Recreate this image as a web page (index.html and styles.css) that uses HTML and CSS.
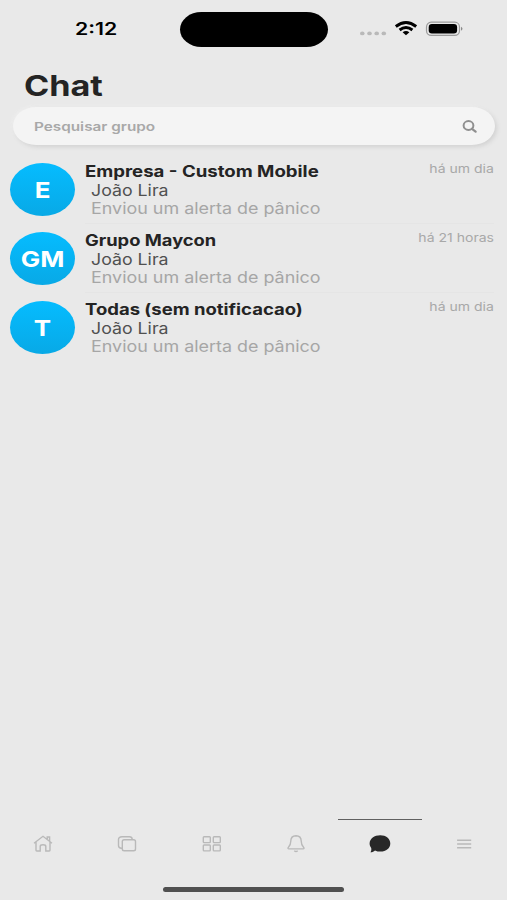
FILE: index.html
```html
<!DOCTYPE html>
<html lang="pt-BR">
<head>
<meta charset="utf-8">
<title>Chat</title>
<link rel="stylesheet" href="styles.css">
</head>
<body>
<div class="screen">
  <header class="status">
    <div class="clock"><span class="wide">2:12</span></div>
    <div class="island"></div>
    <svg class="indicators" width="106" height="20" viewBox="0 0 106 20">
      <g fill="#b9b9b9"><ellipse cx="4.3" cy="14.4" rx="2.3" ry="1.9"/><ellipse cx="11.5" cy="14.4" rx="2.3" ry="1.9"/><ellipse cx="18.7" cy="14.4" rx="2.3" ry="1.9"/><ellipse cx="25.8" cy="14.4" rx="2.3" ry="1.9"/></g>
      <g fill="none" stroke="#000" stroke-width="2.9">
        <path d="M37.8 7.5Q48 -.6 58.2 7.5"/>
        <path d="M41.6 11Q48 5.8 54.4 11"/>
      </g>
      <path d="M44.6 13.2Q48 10.7 51.4 13.2L48 16.2Z" fill="#000"/>
      <rect x="68.5" y="3.2" width="33" height="13.2" rx="4.7" fill="none" stroke="#9b9b9b" stroke-width="1.2"/>
      <rect x="70.7" y="5.1" width="28.4" height="9.4" rx="3.2" fill="#000"/>
      <path d="M103 7.8Q106 9.8 103 11.8Z" fill="#8a8a8a"/>
    </svg>
  </header>
  <h1 class="title"><span class="wide">Chat</span></h1>
  <div class="search">
    <span class="wide">Pesquisar grupo</span>
    <svg width="16" height="14" viewBox="0 0 16 14" fill="none" stroke="#8f8f8f"><ellipse cx="6.5" cy="6.5" rx="4.9" ry="4.4" stroke-width="2"/><path d="M10 9.8L13.6 12.7" stroke-width="2.2" stroke-linecap="round"/></svg>
  </div>
  <main class="list">
    <article class="row">
      <div class="avatar"><span class="wide">E</span></div>
      <div class="body">
        <div class="name"><span class="wide n1">Empresa - Custom Mobile</span></div>
        <div class="sender"><span class="wide">João Lira</span></div>
        <div class="message"><span class="wide">Enviou um alerta de pânico</span></div>
      </div>
      <div class="time"><span class="wide">há um dia</span></div>
    </article>
    <article class="row">
      <div class="avatar"><span class="wide">GM</span></div>
      <div class="body">
        <div class="name"><span class="wide n2">Grupo Maycon</span></div>
        <div class="sender"><span class="wide">João Lira</span></div>
        <div class="message"><span class="wide">Enviou um alerta de pânico</span></div>
      </div>
      <div class="time"><span class="wide">há 21 horas</span></div>
    </article>
    <article class="row">
      <div class="avatar"><span class="wide">T</span></div>
      <div class="body">
        <div class="name"><span class="wide n3">Todas (sem notificacao)</span></div>
        <div class="sender"><span class="wide">João Lira</span></div>
        <div class="message"><span class="wide">Enviou um alerta de pânico</span></div>
      </div>
      <div class="time"><span class="wide">há um dia</span></div>
    </article>
  </main>
  <nav class="tabs">
    <div class="tab"><svg viewBox="0 0 22 20"><path d="M2 9.2L11 2.3L20 9.2M4 8V16.3Q4 17 4.8 17H8.2V12.5Q8.2 10.8 11 10.8Q13.8 10.8 13.8 12.5V17H17.2Q18 17 18 16.3V8M15.2 5V3H17.6V7"/></svg></div>
    <div class="tab"><svg viewBox="0 0 22 20"><rect x="6.3" y="5.8" width="13.2" height="11" rx="1.8"/><path d="M6.3 14.3H5.5Q2.5 14 2.5 11.5V5.5Q2.5 2.8 6 2.8H13.5Q16 2.8 16.3 5.3"/></svg></div>
    <div class="tab"><svg viewBox="0 0 22 20"><rect x="2.3" y="2.7" width="7" height="5.9" rx=".8"/><rect x="12.3" y="2.7" width="7" height="5.9" rx=".8"/><rect x="2.3" y="11" width="7" height="5.9" rx=".8"/><rect x="12.3" y="11" width="7" height="5.9" rx=".8"/></svg></div>
    <div class="tab"><svg viewBox="0 0 22 20"><path d="M11 1.7C7.5 1.8 5.8 4.2 5.8 7C5.8 11 4.8 12 3.3 13.4Q2.4 14.8 4 14.9H18Q19.6 14.8 18.7 13.4C17.2 12 16.2 11 16.2 7C16.2 4.2 14.5 1.8 11 1.7Z"/><path d="M9.3 16.8Q11 18.2 12.7 16.8"/></svg></div>
    <div class="tab active"><svg viewBox="0 0 22 20"><path d="M11.2 1.3C17 1.3 21.3 4.8 21.3 9.5S17 17.6 11.5 17.6C9.4 17.6 7.6 17.2 6 16.4C4.6 17.7 3 18.4 1.4 18.2C2.2 17.1 2.6 15.7 2.2 13.9C1.1 12.6.6 11 .6 9.5C.6 4.8 5.4 1.3 11.2 1.3Z"/></svg></div>
    <div class="tab"><svg viewBox="0 0 22 20"><path d="M3.1 6.2H17.2M3.1 10H17.2M3.1 13.7H17.2"/></svg></div>
  </nav>
  <footer class="home"><div class="handle"></div></footer>
</div>
</body>
</html>
```
FILE: styles.css
```css
* { box-sizing: border-box; }
body { margin: 0; background: #e9e9e9; font-family: Inter, "Liberation Sans", sans-serif; color: #242424; }
.screen { width: 507px; height: 900px; display: flex; flex-direction: column; overflow: hidden; }
.wide { display: inline-block; white-space: nowrap; transform: scaleX(1.22); transform-origin: left center; }
.status { height: 60px; display: grid; grid-template-columns: 180px 148px 1fr; padding-top: 12px; flex: none; }
.clock { padding: 6px 0 0 75px; font-size: 17px; line-height: 22px; font-weight: 600; color: #000; }
.clock .wide { transform: scaleX(1.25); }
.island { height: 35px; border-radius: 22px / 18px; background: #000; }
.indicators { margin: 6.5px 0 0 30px; }
.title { margin: 5px 0 0 24px; height: 42px; font-size: 28px; line-height: 42px; font-weight: 700; }
.search { flex: none; height: 38px; margin: 0 12px 0 13px; padding: 0 17px 0 21px; display: flex; align-items: center; justify-content: space-between; border-radius: 23px / 19px; background: #f4f4f4; color: #a8a8a8; font-size: 12px; font-weight: 600; box-shadow: 2px 2px 4px #d2d2d2, -1px -1px 3px #efefef; }
.search .wide { transform: scaleX(1.275); }
.list { padding: 16px 13px 0 10px; }
.row { display: flex; height: 69px; }
.avatar { flex: none; width: 65px; height: 53px; margin-top: 2px; border-radius: 50%; display: flex; align-items: center; justify-content: center; background: linear-gradient(#05bcff, #08a9e6); color: #fff; font-size: 22px; font-weight: 700; }
.avatar .wide { transform-origin: center; transform: scaleX(1.18); }
.body { flex: 1; margin-left: 10px; padding-top: 2px; font-size: 15.5px; line-height: 18.6px; border-bottom: 1px solid #e5e5e5; height: 63px; }
.row:last-child .body { border-bottom: 0; }
.name { font-weight: 700; }
.n1 { transform: scaleX(1.2); }
.n2 { transform: scaleX(1.182); }
.n3 { transform: scaleX(1.193); }
.sender, .message { padding-left: 6px; }
.sender { color: #505050; }
.sender .wide { transform: scaleX(1.145); }
.message { color: #a6a6a6; }
.message .wide { transform: scaleX(1.155); }
.time { font-size: 11.5px; line-height: 16px; color: #a8a8a8; border-bottom: 1px solid #e5e5e5; height: 63px; }
.row:last-child .time { border-bottom: 0; }
.time .wide { transform-origin: right center; }
.tabs { margin-top: auto; height: 49px; flex: none; display: grid; grid-template-columns: repeat(6, 84.3px); padding-left: 1px; }
.tab { display: flex; justify-content: center; padding-top: 12.5px; border-top: 2px solid transparent; }
.tab svg { width: 22px; height: 20px; fill: none; stroke: #b9b9b9; stroke-width: 1.4; }
.active { border-top: 1px solid #606060; padding-top: 13.5px; }
.tab.active svg { fill: #282828; stroke: none; }
.home { height: 32px; flex: none; display: flex; justify-content: center; padding-top: 19px; }
.handle { width: 181px; height: 5px; border-radius: 3px; background: #505050; }
```
